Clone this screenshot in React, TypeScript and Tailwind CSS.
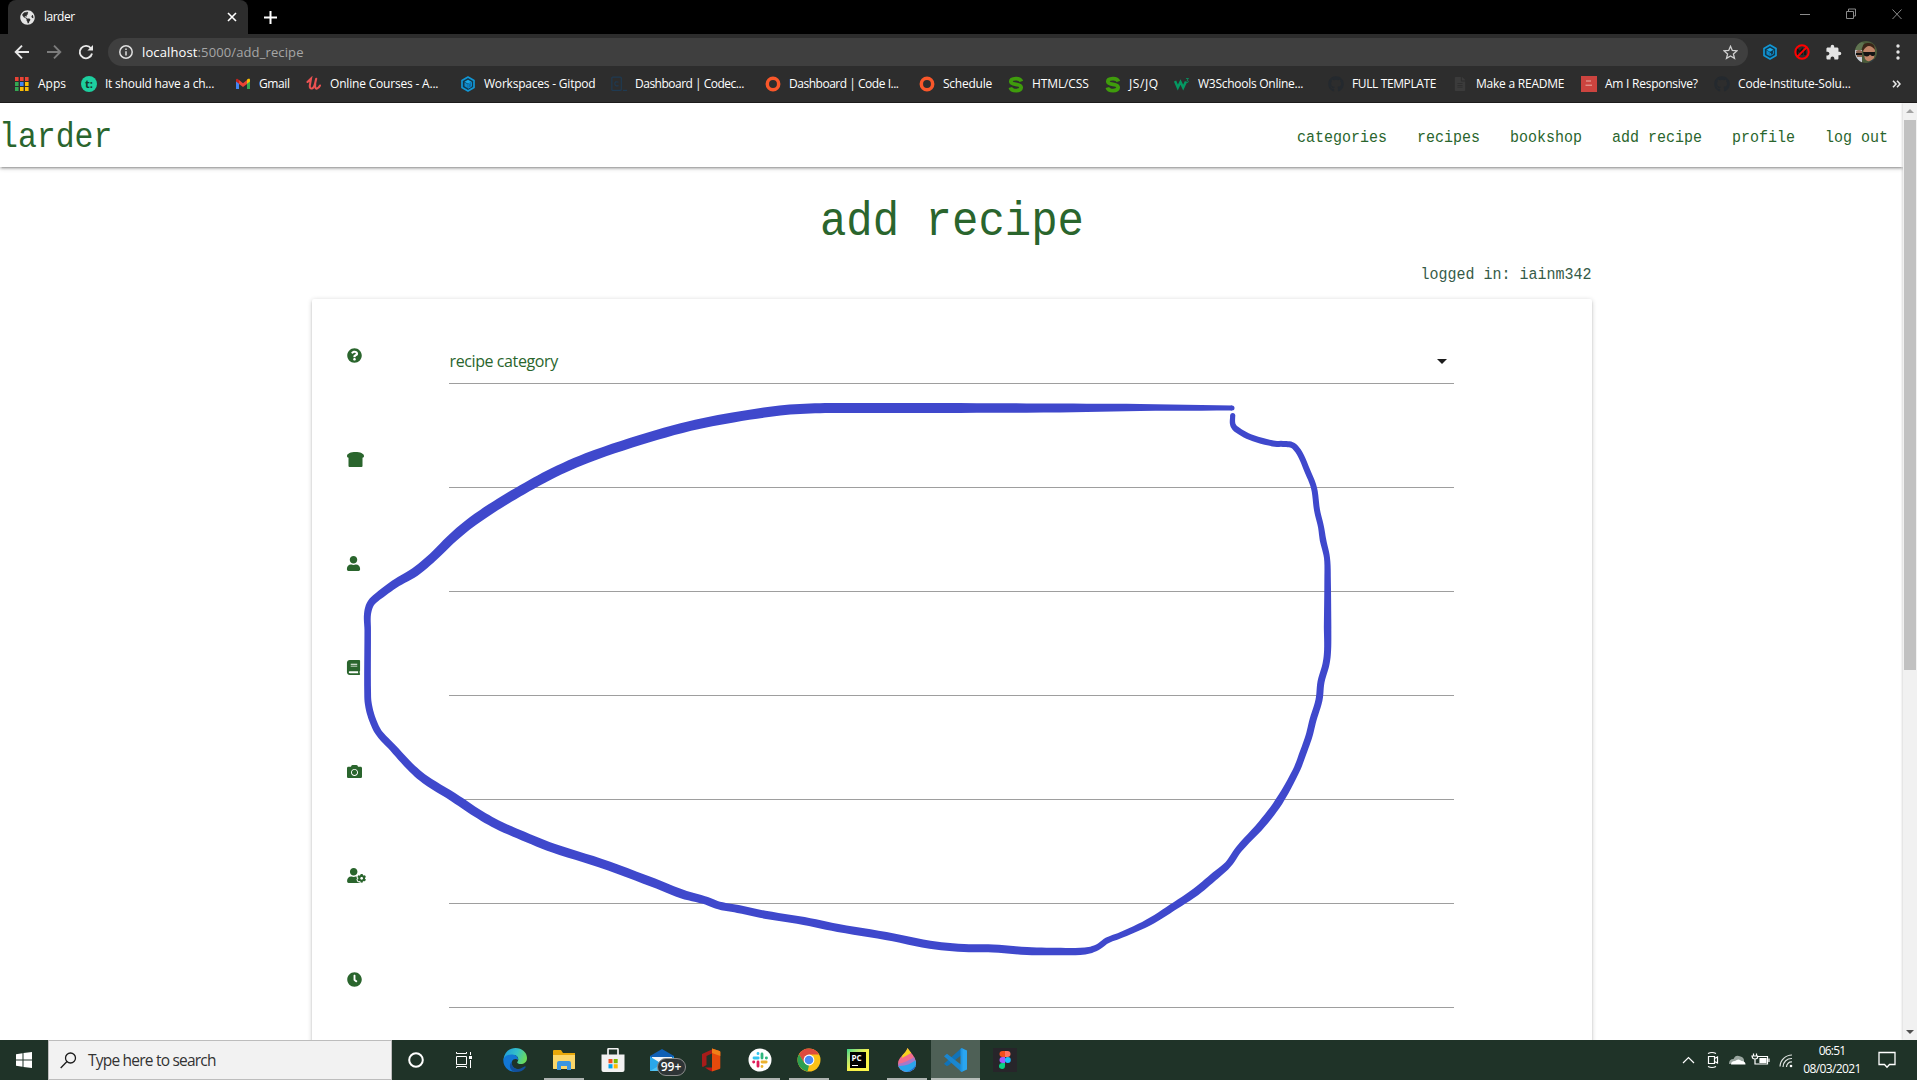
import { useLayoutEffect, useRef, type ReactNode } from "react";
import {
  FaQuestionCircle,
  FaUser,
  FaBook,
  FaCamera,
  FaUserCog,
  FaClock,
  FaGithub,
  FaGlobeAmericas,
  FaFileAlt,
} from "react-icons/fa";
import { MdExtension } from "react-icons/md";

/* Single line of text whose tracking is adjusted so it fills `w` pixels. */
function Fit({ w, className = "", children }: { w: number; className?: string; children: ReactNode }) {
  const ref = useRef<HTMLSpanElement>(null);
  useLayoutEffect(() => {
    const el = ref.current;
    if (!el) return;
    el.style.letterSpacing = "0px";
    const n = (el.textContent || "").length;
    el.style.letterSpacing = `${(w - el.offsetWidth) / n}px`;
  }, [w]);
  return (
    <span ref={ref} className={`inline-block whitespace-pre shrink-0 ${className}`}>
      {children}
    </span>
  );
}

/* ---------- browser icons ---------- */
const AppsIcon = () => (
  <svg width="16" height="16" viewBox="0 0 16 16">
    {["#ea4335", "#ea4335", "#ea4335", "#34a853", "#4285f4", "#fbbc05", "#34a853", "#fbbc05", "#fbbc05"].map((c, i) => (
      <rect key={i} x={1 + (i % 3) * 5} y={1 + Math.floor(i / 3) * 5} width="3.6" height="4" fill={c} />
    ))}
  </svg>
);
const TIcon = () => (
  <div className="flex h-4 w-4 items-center justify-center rounded-full bg-[#1dcf9f] pb-0.5 font-['Open_Sans',sans-serif] text-[11px] font-bold leading-none text-[#15372e]">
    t:
  </div>
);
const GmailIcon = () => (
  <svg width="16" height="16" viewBox="0 0 16 16">
    <path d="M1 3.5v9.5h3V6.5z" fill="#4285f4" />
    <path d="M15 3.5v9.5h-3V6.5z" fill="#34a853" />
    <path d="M12 3.6 14 2.6Q15 2.8 15 4v1.5l-3 2.3z" fill="#fbbc04" />
    <path d="M4 4 8 7.2 12 4v4L8 11 4 8z" fill="#ea4335" />
    <path d="M1 5.5V4Q1 2.7 2.3 2.7L4 4v3.8z" fill="#c5221f" />
  </svg>
);
const UdemyIcon = () => (
  <svg width="16" height="16" viewBox="0 0 16 16" fill="none" stroke="#ea5252" strokeLinecap="round">
    <path d="M1.5 6 5 2.6 3.8 9.5Q3.6 13 6 12.5 8.2 11.8 9.2 7L10.2 2.8" strokeWidth="2.1" />
    <path d="M9.2 8Q8.6 13 11 12.6 12.7 12.2 14 9.5" strokeWidth="2.1" />
  </svg>
);
const GitpodIcon = ({ g = false }: { g?: boolean }) => (
  <svg width="16" height="16" viewBox="0 0 16 16">
    <path d="M8 1 14 4.5V11.5L8 15 2 11.5V4.5Z" fill="#12384c" stroke="#1296d4" strokeWidth="1.7" strokeLinejoin="round" />
    <path d="M8 3.8 11.5 5.8 8 7.8 4.5 5.8Z" fill="#1aa6e4" />
    <path d="M4.5 6.2 7.8 8.2V12.3L4.5 10.3Z" fill="#0f8acb" />
    <path d={g ? "M11.6 6.5V9.7L8.5 11.5V9" : "M11.5 6.2V10.3L8.3 12.3V8.2Z"} fill={g ? "none" : "#0a6eb0"} stroke="#0f8acb" strokeWidth="1" />
  </svg>
);
const CodecademyIcon = () => (
  <svg width="16" height="16" viewBox="0 0 16 16" fill="none" stroke="#1f3a52" strokeWidth="1.2">
    <rect x="0.8" y="1.2" width="9.5" height="13.2" rx="1" />
    <path d="M7.5 6.2Q4 4.8 3.8 7.8 4 10.8 7.5 9.6M12 14.3h4" />
  </svg>
);
const RingIcon = () => (
  <svg width="16" height="16" viewBox="0 0 16 16">
    <circle cx="8" cy="8" r="5.7" fill="none" stroke="#f9572a" strokeWidth="3.5" />
  </svg>
);
const SIcon = () => (
  <svg width="17" height="17" viewBox="0 0 17 17" fill="none">
    <path d="M14.3 5.2Q13 2 8.3 2.2 3 2.4 3 5.3 3 7.6 8.4 8.4 14 9.2 14 11.7 13.6 15 8.6 15 3.4 15 2.5 11.6" stroke="#3f9c0c" strokeWidth="4" />
  </svg>
);
const W3Icon = () => (
  <svg width="16" height="16" viewBox="0 0 16 16" fill="none" stroke="#059862">
    <path d="M1 5 3.8 11.5 6.5 6 9.2 11.5 12 5.5" strokeWidth="2.5" />
    <path d="M12 2.5h2.5L13 4.2Q15.3 5 14 6.3 13 6.8 12 6" strokeWidth="0.8" />
  </svg>
);
const RedIcon = () => (
  <svg width="16" height="16" viewBox="0 0 16 16">
    <rect width="16" height="16" fill="#cc443f" />
    <path d="M5 5h5M4.5 9.2h6.5" stroke="#e9b0a9" strokeWidth="1" />
  </svg>
);

type Mark = { icon: ReactNode; label: string; pitch: string; text: number };
const BOOKMARKS: Mark[] = [
  { icon: <AppsIcon />, label: "Apps", pitch: "w-[67px]", text: 28 },
  { icon: <TIcon />, label: "It should have a ch...", pitch: "w-[154px]", text: 109 },
  { icon: <GmailIcon />, label: "Gmail", pitch: "w-[71px]", text: 31 },
  { icon: <UdemyIcon />, label: "Online Courses - A...", pitch: "w-[154px]", text: 108 },
  { icon: <GitpodIcon />, label: "Workspaces - Gitpod", pitch: "w-[151px]", text: 111 },
  { icon: <CodecademyIcon />, label: "Dashboard | Codec...", pitch: "w-[154px]", text: 109 },
  { icon: <RingIcon />, label: "Dashboard | Code I...", pitch: "w-[154px]", text: 110 },
  { icon: <RingIcon />, label: "Schedule", pitch: "w-[89px]", text: 49 },
  { icon: <SIcon />, label: "HTML/CSS", pitch: "w-[97px]", text: 57 },
  { icon: <SIcon />, label: "JS/JQ", pitch: "w-[69px]", text: 30 },
  { icon: <W3Icon />, label: "W3Schools Online...", pitch: "w-[154px]", text: 105 },
  { icon: <FaGithub className="text-[#24292e]" size={16} />, label: "FULL TEMPLATE", pitch: "w-[124px]", text: 84 },
  { icon: <FaFileAlt className="text-[#3b3b3b]" size={14} />, label: "Make a README", pitch: "w-[129px]", text: 88 },
  { icon: <RedIcon />, label: "Am I Responsive?", pitch: "w-[133px]", text: 93 },
  { icon: <FaGithub className="text-[#24292e]" size={16} />, label: "Code-Institute-Solu...", pitch: "w-[178px]", text: 113 },
];

function Browser() {
  return (
    <header className="h-[103px] shrink-0 border-b border-[#1d1b1b] bg-[#2d2d2d] font-['Open_Sans',sans-serif] text-white">
      <div className="flex h-[34px] items-stretch bg-black">
        <div className="ml-2 flex w-60 items-center rounded-t-lg bg-[#2d2d2d] pr-2.5 pl-3">
          <FaGlobeAmericas size={15} className="text-[#e4e4e4]" />
          <Fit w={31} className="ml-[9px] text-[12px]">larder</Fit>
          <svg className="mr-px ml-auto" width="10" height="10" viewBox="0 0 10 10" stroke="#fff" strokeWidth="1.6">
            <path d="M1 1l8 8M9 1l-8 8" />
          </svg>
        </div>
        <svg className="ml-4 self-center" width="13" height="13" viewBox="0 0 13 13" stroke="#fff" strokeWidth="2">
          <path d="M6.5 0v13M0 6.5h13" />
        </svg>
        <svg className="ml-auto" width="130" height="34" viewBox="0 0 130 34" fill="none" stroke="#8b8b8b" strokeWidth="1">
          <path d="M13 14.5h10M59.500 11.500h7v7h-7zM61.500 11v-2h7v7h-2M105.500 9.500l9 9.500M114.500 9.500l-9 9.500" />
        </svg>
      </div>

      <div className="flex h-9 items-center">
        <svg width="108" height="36" viewBox="0 0 108 36" fill="none" strokeWidth="1.9">
          <path d="M29 18H16M22 11.700 15.700 18 22 24.300" stroke="#e8e8e8" />
          <path d="M47 18h13M54 11.700 60.300 18 54 24.300" stroke="#7c7c7c" />
          <path d="M91 14.500A6.200 6.200 0 1 0 92 19.500" stroke="#e8e8e8" />
          <path d="M93 11v5.600h-5.600z" fill="#e8e8e8" />
        </svg>
        <div className="flex h-7 w-[1640px] items-center rounded-full bg-[#3f3f3f] pl-[11px]">
          <svg width="14" height="14" viewBox="0 0 14 14" fill="none" stroke="#e0e0e0" strokeWidth="1.500">
            <circle cx="7" cy="7" r="6.200" />
            <path d="M7 6.200v4.300M7 3.500v1.600" />
          </svg>
          <Fit w={162} className="mt-px ml-[9px] text-[13px] text-[#a6a6a6]"><span className="text-white">localhost</span>:5000/add_recipe</Fit>
          <svg className="mr-2.5 ml-auto" width="15" height="15" viewBox="0 0 15 15" fill="none" stroke="#d0d0d0" strokeWidth="1.300">
            <path d="M7.500 1.300 9.300 5.500l4.600.4-3.500 3 1.100 4.500-4-2.400-4 2.400 1.100-4.500-3.500-3 4.600-.4z" />
          </svg>
        </div>
        <div className="ml-3.5 flex items-center gap-4">
          <GitpodIcon g />
          <svg width="16" height="16" viewBox="0 0 16 16" fill="none">
            <path d="M3.500 11V5.500L6 8l2-2.500V11M11 6v5" stroke="#111" strokeWidth="1.500" />
            <circle cx="8" cy="8" r="6.700" stroke="#f00" strokeWidth="2" />
            <path d="M12.600 3.400 3.400 12.600" stroke="#f00" strokeWidth="2" />
          </svg>
          <MdExtension size={17} className="-ml-px text-[#e4e4e4]" />
          <svg className="-ml-[3px]" width="22" height="22" viewBox="0 0 22 22">
            <clipPath id="avatar"><circle cx="11" cy="11" r="11" /></clipPath>
            <g clipPath="url(#avatar)">
              <rect width="22" height="22" fill="#4a5a3a" />
              <path d="M0 9h7v13H0z" fill="#c9ccd6" />
              <path d="M1 10q3-2 6 0v6H2z" fill="#8a6350" />
              <path d="M8 9q0-6 6-6t6 6l-1 8q-5 6-9 1z" fill="#c08468" />
              <path d="M7 9q0-8 7-7 6 0 6 7-3-4-6-4T8 10z" fill="#3a2518" />
              <path d="M8 11h12v2.500q-1 2.500-4 1l-1-1q-2 3.500-6 1zM1 12h6v2H1z" fill="#141414" />
              <path d="M0 4q6-4 9-2L6 9H0z" fill="#5f7350" />
              <path d="M13 22q4-3 6-4l3 4z" fill="#2a3446" />
            </g>
          </svg>
        </div>
        <svg className="ml-[19px]" width="4" height="18" viewBox="0 0 4 18" fill="#e4e4e4">
          <circle cx="2" cy="3" r="1.700" /><circle cx="2" cy="9" r="1.700" /><circle cx="2" cy="15" r="1.700" />
        </svg>
      </div>

      <div className="flex h-7 items-center pl-3.5">
        {BOOKMARKS.map((b) => (
          <div key={b.label} className={`flex shrink-0 items-center gap-2 ${b.pitch}`}>
            <div className="flex w-4 shrink-0 justify-center">{b.icon}</div>
            <Fit w={b.text} className="text-[12px]">{b.label}</Fit>
          </div>
        ))}
        <svg width="9" height="8" viewBox="0 0 9 8" fill="none" stroke="#e8e8e8" strokeWidth="1.600">
          <path d="M1 .8 4 4 1 7.200M5 .8 8 4 5 7.200" />
        </svg>
      </div>
    </header>
  );
}

/* ---------- page ---------- */
const BreadIcon = () => (
  <svg width="17" height="15" viewBox="0 0 17 15" fill="currentColor">
    <path d="M8.500 0C4 0 0 1.500 0 4c0 1.200.6 1.700 1.500 1.700V14q0 1 1 1h12q1 0 1-1V5.700C16.400 5.700 17 5.200 17 4c0-2.500-4-4-8.500-4z" />
  </svg>
);

const ROWS: ReactNode[] = [
  <FaQuestionCircle size={15} />,
  <BreadIcon />,
  <FaUser size={15} className="-ml-px" />,
  <FaBook size={15} className="-ml-px" />,
  <FaCamera size={15} />,
  <FaUserCog size={19} className="h-[15px]" />,
  <FaClock size={15} />,
];

function LarderPage() {
  return (
    <div className="min-w-0 flex-1 overflow-hidden bg-white font-['Liberation_Mono',monospace] text-[#2a652d]">
      <nav className="flex h-16 items-center justify-between pr-[15px] shadow-[0_2px_2px_0_rgba(0,0,0,0.14),0_3px_1px_-2px_rgba(0,0,0,0.12),0_1px_5px_0_rgba(0,0,0,0.2)]">
        <Fit w={113} className="-ml-px pt-1.5 text-[31.500px] leading-none scale-y-110">larder</Fit>
        <div className="flex scale-y-110 gap-[30px] pt-1.5 text-[15px]">
          {["categories", "recipes", "bookshop", "add recipe", "profile", "log out"].map((t) => (
            <a key={t}>{t}</a>
          ))}
        </div>
      </nav>
      <h2 className="scale-y-110 pt-[28px] pb-0.5 pl-px text-center text-[44px] leading-[52px]">add recipe</h2>
      <p className="mx-auto mt-[16px] mb-[12px] h-[22px] w-[1280px] scale-y-110 text-right text-[15px] leading-[22px] text-[#365b48]">logged in: iainm342</p>
      <main className="mx-auto h-[900px] w-[1280px] rounded-[2px] bg-white pt-[35px] shadow-[0_2px_2px_0_rgba(0,0,0,0.14),0_3px_1px_-2px_rgba(0,0,0,0.12),0_1px_5px_0_rgba(0,0,0,0.2)]">
        {ROWS.map((icon, i) => (
          <div key={i} className="flex h-[104px] items-start">
            <div className="flex h-[42px] w-[137px] items-center pl-[35px]">{icon}</div>
            <div className="flex h-[50px] w-[1005px] items-center justify-between border-b border-[#9e9e9e] pr-[7px] pb-px pl-px font-['Open_Sans',sans-serif] text-[16px]">
              {i === 0 && (
                <>
                  <Fit w={108} className="pt-1.5">recipe category</Fit>
                  <span className="mt-1.5 border-x-[5px] border-t-[5px] border-x-transparent border-t-[#1c1c1c]" />
                </>
              )}
            </div>
          </div>
        ))}
      </main>
    </div>
  );
}

/* ---------- freehand loop: x, y, pen width ---------- */
type P = [number, number, number];
const LOOP: P[] = [
  [1232, 408, 5], [1140, 407.5, 7], [1060, 408, 9], [960, 408, 9.8], [840, 408, 10], [810, 408.5, 10], [780, 410.5, 10],
  [733, 417.5, 10], [690, 426, 10], [640, 440, 10], [587, 458, 10], [553, 473, 10], [527, 487, 10], [500, 503, 10],
  [473, 521, 10], [453, 537.5, 9.5], [433, 557, 9], [415, 572, 9], [397, 582.5, 8.5], [381, 594, 8], [371, 603, 7.5],
  [367.5, 614, 7], [367.7, 630, 6.5], [367.7, 697, 6.8], [369.3, 709, 7], [373, 721, 7], [379, 733, 7], [393, 748, 7.5],
  [410, 766.5, 8], [425, 779.5, 8.5], [453, 797, 9], [477, 813, 9], [497, 824.5, 9], [523, 836, 9], [553, 848, 9],
  [600, 863, 9], [653, 882.5, 9], [682, 894, 9], [704, 900, 8], [719, 905.5, 8], [738, 909, 8], [765, 914.7, 8],
  [804, 921, 8], [838, 928, 8], [886, 936, 8], [930, 944.7, 8], [964, 948, 8], [993, 948.5, 8], [1027, 951, 8],
  [1056, 951.5, 7.5], [1085, 951, 7], [1097, 947.5, 6], [1107, 940.5, 6], [1121, 935, 6], [1148, 922.7, 7],
  [1172, 907.7, 7.5], [1196, 891.7, 8], [1213, 877.5, 8], [1228, 864.5, 7], [1239, 849, 7], [1262, 824, 8], [1279, 801.5, 8],
  [1296, 771, 7], [1303, 753, 7], [1309, 736, 7], [1313, 720, 7], [1319, 700, 7], [1321, 682, 7], [1326, 664, 7],
  [1327.6, 650, 7], [1327.6, 627, 7.5], [1327.6, 580, 6.5], [1327, 558, 6], [1323, 540, 6.5], [1321, 527, 6],
  [1317, 510, 6], [1314, 488, 6], [1307, 470, 6], [1300, 454, 6], [1293, 445.5, 6], [1285, 444, 6], [1273, 443.5, 6],
  [1250, 437, 6], [1236, 429, 6], [1232.7, 424, 5.5], [1232.7, 415.5, 5],
];

/* Cubic Hermite interpolation through the points. */
function smooth(points: P[], steps: number): P[] {
  const out: P[] = [];
  for (let i = 0; i < points.length - 1; i++) {
    const a = points[Math.max(0, i - 1)];
    const b = points[i];
    const c = points[i + 1];
    const d = points[Math.min(points.length - 1, i + 2)];
    const len = (p: P, q: P) => Math.hypot(q[0] - p[0], q[1] - p[1]);
    const L = len(b, c);
    const m1 = [0, 1].map((k) => ((c[k] - a[k]) / (len(a, b) + L)) * L);
    const m2 = [0, 1].map((k) => ((d[k] - b[k]) / (L + len(c, d))) * L);
    for (let s = 0; s < steps; s++) {
      const t = s / steps;
      const h = (k: number) =>
        (2 * t ** 3 - 3 * t ** 2 + 1) * b[k] + (t ** 3 - 2 * t ** 2 + t) * m1[k] + (-2 * t ** 3 + 3 * t ** 2) * c[k] + (t ** 3 - t ** 2) * m2[k];
      out.push([h(0), h(1), b[2] + (c[2] - b[2]) * t]);
    }
  }
  out.push(points[points.length - 1]);
  return out;
}

/* Outline of the stroke: left side forward, right side back. */
function outline(pts: P[]): string {
  const side = (sign: number) =>
    pts.map((p, i) => {
      const a = pts[Math.max(0, i - 1)];
      const b = pts[Math.min(pts.length - 1, i + 1)];
      const l = Math.hypot(b[0] - a[0], b[1] - a[1]) || 1;
      const r = (sign * p[2]) / 2;
      return `${(p[0] - ((b[1] - a[1]) / l) * r).toFixed(2)},${(p[1] + ((b[0] - a[0]) / l) * r).toFixed(2)}`;
    });
  return [...side(1), ...side(-1).reverse()].join(" ");
}

function PenLoop() {
  return (
    <svg className="pointer-events-none absolute top-0 left-0" width="1917" height="1080" viewBox="0 0 1917 1080" fill="#3f48cc">
      <polygon points={outline(smooth(LOOP, 6))} fillRule="nonzero" />
      <circle cx="1232" cy="408" r="2.5" />
      <circle cx="1232.7" cy="415.5" r="2.5" />
    </svg>
  );
}

/* ---------- taskbar ---------- */
const svg24 = { width: 24, height: 24, viewBox: "0 0 24 24" };
const Edge = () => (
  <svg {...svg24}>
    <defs>
      <linearGradient id="eg" x1="0" x2="1" y1="0.2" y2="0.5"><stop stopColor="#1d9bdc" /><stop offset="0.550" stopColor="#35c1c8" /><stop offset="1" stopColor="#6bdb5a" /></linearGradient>
    </defs>
    <path d="M0.500 11C1.500 4 6.500 0 12.500 0 19 0 24 4.500 24 10c0 4-3 6-6.200 6-2.800 0-4.300-1-3.300-2.300 2-3 0-6.700-4-6.700-4.500 0-8 2-10 4z" fill="url(#eg)" />
    <path d="M0.300 11C2.300 7.500 6 6.300 9.500 6.500c4 .3 6 3 5.500 5.500-1.500-1.500-5-1.300-6 1.500C7.500 18 12 22 16.500 21.500 14 24 9 24.500 5.500 22 1.500 19.500 0 15.500 0.300 11z" fill="#1277d4" />
    <path d="M8.800 13.500C8 18 12 21.500 17 20.800l4.500-2.300c1-.5 1.500.2 1 1C20.500 22.500 17 24 13.500 24 8 24 4.500 18 8.800 13.500z" fill="#12509c" />
  </svg>
);
const Explorer = () => (
  <svg {...svg24}>
    <path d="M1 4V3q0-1 1-1h7l2 3H23v16H1z" fill="#e8a70a" />
    <path d="M1 7h22v13q0 1-1 1H2q-1 0-1-1z" fill="#fbd669" />
    <path d="M5 22v-7q0-2 2-2h10q2 0 2 2v7h-4v-4H9v4z" fill="#3a95e0" />
  </svg>
);
const Store = () => (
  <svg {...svg24}>
    <path d="M7 7V1.500q0-.8.8-.8h8.400q.8 0 .8.800V7" fill="none" stroke="#f2f2f2" strokeWidth="1.700" />
    <path d="M0.500 6.500h23V22q0 2-2 2h-19q-2 0-2-2z" fill="#f2f2f2" />
    <path d="M7.500 11h4v4.200h-4z" fill="#f25022" /><path d="M12.700 11h4v4.200h-4z" fill="#7fba00" />
    <path d="M7.500 16.200h4v4.200h-4z" fill="#00a4ef" /><path d="M12.700 16.200h4v4.200h-4z" fill="#ffb900" />
  </svg>
);
const Mail = () => (
  <div className="relative">
    <svg {...svg24}>
      <path d="M0 8 12 1l12 7v15H0z" fill="#0f5fb5" />
      <path d="M2 9h20v6H2z" fill="#f1f4f8" />
      <path d="M0 8.500 12 16 24 8.500V23H0z" fill="#2aa7ea" />
      <path d="M0 23 14 14.700 24 23z" fill="#4fc3f3" />
    </svg>
    <div className="absolute top-[10px] left-[7px] flex h-[18px] w-[29px] items-center justify-center rounded-full border border-[#8c8c8c] bg-[#2e3436] font-['Open_Sans',sans-serif] text-[12px] font-semibold text-white">
      99+
    </div>
  </div>
);
const Office = () => (
  <svg {...svg24}>
    <path d="M3 6 13 1.500v4L7.500 8v9L4 19q-1 0-1-1z" fill="#a81c1a" />
    <path d="M13 0.500 20.500 3q.8.300.8 1v16q0 .7-.8 1L13 23.500z" fill="#e64a0c" />
    <path d="M13 0.500 20.500 3q.8.300.8 1v4L13 5z" fill="#f08018" />
    <path d="M6 19.500h7v4q-4-1.500-7-4z" fill="#b81818" />
  </svg>
);
const Slack = () => (
  <svg {...svg24} fill="none" strokeLinecap="round" strokeWidth="2.800">
    <circle cx="12" cy="12" r="11.500" fill="#fff" />
    <path d="M6 10h4.200M10 5.500v.2" stroke="#36c5f0" />
    <path d="M14 10V6M18.300 10h.2" stroke="#2eb67d" />
    <path d="M14 14h4.200M14 18.300v.2" stroke="#ecb22e" />
    <path d="M10 14v4.200M5.600 14h.2" stroke="#e01e5a" />
  </svg>
);
const Chrome = () => (
  <svg {...svg24}>
    <circle cx="12" cy="12" r="11.500" fill="#fbc116" />
    <path d="M2 6.300A11.500 11.500 0 0 1 22 6.500H12L7 14.800z" fill="#dd4b3e" />
    <path d="M2 6.300 7.200 14.800 12 17.500 10.500 23.400A11.500 11.500 0 0 1 2 6.300z" fill="#2c9f51" />
    <circle cx="12" cy="12" r="5.400" fill="#fff" /><circle cx="12" cy="12" r="4.300" fill="#4a8af4" />
  </svg>
);
const PyCharm = () => (
  <div className="h-[22px] w-[22px] bg-linear-to-br from-[#21d789] via-[#f5f04a] to-[#fcf84a] p-[3px]">
    <div className="h-4 w-4 bg-black pt-0.5 pl-0.5 font-['Open_Sans',sans-serif] text-[8px] font-bold leading-[8px] text-white">
      PC
      <div className="mt-[3px] h-px w-1.5 bg-white" />
    </div>
  </div>
);
const Drop = () => (
  <svg {...svg24}>
    <defs><clipPath id="dc"><path d="M12.500 0C15 4 21 9 21 15.500A9 8.500 0 0 1 3 15.500C3 9 11 6 12.500 0z" /></clipPath></defs>
    <g clipPath="url(#dc)">
      <rect width="24" height="24" fill="#f36c8c" />
      <path d="M8 0h10v4L7 10z" fill="#f5d21e" />
      <path d="M0 16Q10 16 22 7v18H0z" fill="#a878c8" />
      <path d="M0 17.500Q12 20 22 11v14H0z" fill="#2ba5ea" />
      <path d="M12 24Q20 21 22 14v10z" fill="#1668c9" />
    </g>
  </svg>
);
const VsCode = () => (
  <svg {...svg24}>
    <path d="M17.500 0 23 2.500v19L17.500 24z" fill="#2aa5f0" />
    <path d="M17.500 0v7L4 17.800 2.500 18 0 15.800z" fill="#1173b8" />
    <path d="M17.500 24v-7L3 5.700l-3 2.500z" fill="#1a86d0" />
    <path d="M16.500 1 17.500 0l1 1v22l-1 1-1-1z" fill="#2196e3" />
  </svg>
);
const Figma = () => (
  <svg {...svg24}>
    <rect width="24" height="24" rx="1" fill="#27252a" />
    <path d="M12 3H9.500a3 3 0 0 0 0 6H12z" fill="#f24e1e" /><path d="M12 3h2.500a3 3 0 0 1 0 6H12z" fill="#ff7262" />
    <path d="M12 9H9.500a3 3 0 0 0 0 6H12z" fill="#a259ff" /><circle cx="14.800" cy="12" r="3" fill="#1abcfe" />
    <path d="M12 15H9.500a3 3 0 1 0 2.500 3z" fill="#0acf83" />
  </svg>
);
const Cortana = () => (
  <svg {...svg24} className="mr-0.5" fill="none"><circle cx="12" cy="12" r="6.800" stroke="#fff" strokeWidth="2" /></svg>
);
const TaskView = () => (
  <svg {...svg24} className="mr-[3px]" fill="none" stroke="#fff" strokeWidth="1">
    <path d="M4.500 8.500h10v8h-10zM4.500 4v1.500h10V4M4.500 20v-1.500h10V20M18.500 4v3M18.500 12v8" />
    <rect x="17.500" y="8.500" width="2" height="2" fill="#fff" />
  </svg>
);

const TASKS: { icon: ReactNode; bar?: boolean; active?: boolean }[] = [
  { icon: <Cortana /> }, { icon: <TaskView /> }, { icon: <Edge /> }, { icon: <Explorer />, bar: true },
  { icon: <Store /> }, { icon: <Mail /> }, { icon: <Office /> }, { icon: <Slack />, bar: true },
  { icon: <Chrome />, bar: true }, { icon: <PyCharm /> }, { icon: <Drop />, bar: true },
  { icon: <VsCode />, active: true }, { icon: <Figma /> },
];

function Taskbar() {
  return (
    <footer className="flex h-10 shrink-0 items-stretch bg-[#1f3328] font-['Open_Sans',sans-serif] text-white">
      <div className="flex w-12 items-center justify-center">
        <svg width="16" height="16" viewBox="0 0 16 16" fill="#fff">
          <path d="M0 2.200 6.500 1.300V7.500H0zM7.500 1.100 16 0v7.500H7.500zM0 8.500h6.500v6.200L0 13.800zM7.500 8.500H16V16l-8.500-1.100z" />
        </svg>
      </div>
      <div className="flex w-[344px] items-center border border-[#bdbdbd] bg-[#f2f2f2] pl-[11px]">
        <svg width="17" height="17" viewBox="0 0 17 17" fill="none" stroke="#1c1c1c" strokeWidth="1.300">
          <circle cx="10.500" cy="6" r="5" /><path d="M7 9.500.7 16" />
        </svg>
        <Fit w={128} className="mt-0.5 ml-[11px] text-[15.5px] text-[#333]">Type here to search</Fit>
      </div>
      <div className="flex">
        {TASKS.map((t, i) => (
          <div key={i} className={`flex w-[49px] flex-col items-center ${t.active ? "bg-[#4e6056]" : ""}`}>
            <div className="flex h-[38px] items-center pt-0.5">{t.icon}</div>
            {t.bar && <div className="h-0.5 w-10 bg-[#adb3b0]" />}
            {t.active && <div className="h-0.5 w-full bg-[#b6bdb9]" />}
          </div>
        ))}
      </div>
      <svg className="ml-auto" width="120" height="40" viewBox="0 0 120 40" fill="none" stroke="#fff" strokeWidth="1.200">
        <path d="M4 23l5.500-5.500L15 23" />
        <path d="M29.500 16.500h6v7h-6zM35.500 18.500l3-1.500v6l-3-1.500M29 13.500q4-2 8 0M29 26.500q4 2 8 0" />
        <path d="M50 24q0-5 4.500-5 2-5 7-2.500 3 .5 3.500 3.500v2z" fill="#9aa6a0" stroke="none" />
        <path d="M52 24.500q0-3.500 4-3.500 3.500-3 6.500 0 4 0 4 3.500z" fill="#fff" stroke="none" />
        <path d="M79 16.500h9.500v7.500h-9.500M90 18.500v3.500M74.500 13.500v2M77.500 13.500v2M73 16h5.500v2q-2.500 2-5 0zM76 19.500V24h3" />
        <path d="M81 18.500h6v4h-6z" fill="#fff" />
        <path d="M101 26.500A12 12 0 0 1 113 15M104 27A8.500 8.500 0 0 1 113 18.500M107.500 27A5 5 0 0 1 113 22" stroke="#dfe4e1" />
        <circle cx="112" cy="26" r="1.300" fill="#fff" stroke="none" />
      </svg>
      <div className="flex w-[66px] flex-col items-center justify-center text-[12px] leading-[18px]">
        <Fit w={27}>06:51</Fit>
        <Fit w={58}>08/03/2021</Fit>
      </div>
      <svg className="mr-[21px] ml-[13px] self-center" width="18" height="18" viewBox="0 0 18 18" fill="none" stroke="#fff" strokeWidth="1.300">
        <path d="M1 1.500h16v12h-5.500L9 16.200 6.500 13.500H1z" />
      </svg>
    </footer>
  );
}

export default function App() {
  return (
    <div className="relative flex h-[1080px] w-[1917px] flex-col overflow-hidden bg-white">
      <Browser />
      <div className="flex h-[937px] overflow-hidden">
        <LarderPage />
        <aside className="relative flex w-[14px] flex-col items-center justify-between bg-[#f1f1f1] py-1.5 shadow-[-1px_0_2px_rgba(0,0,0,0.15)]">
          <span className="border-x-4 border-b-[4px] border-x-transparent border-b-[#a3a3a3]" />
          <span className="mb-auto mt-[7px] h-[550px] w-[12px] shrink-0 bg-[#c1c1c1]" />
          <span className="border-x-4 border-t-[4px] border-x-transparent border-t-[#505050]" />
        </aside>
      </div>
      <Taskbar />
      <PenLoop />
    </div>
  );
}
